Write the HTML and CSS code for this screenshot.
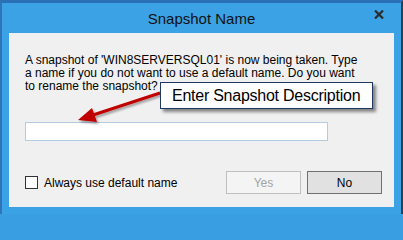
FILE: index.html
```html
<!DOCTYPE html>
<html>
<head>
<meta charset="utf-8">
<link rel="stylesheet" href="styles.css">
</head>
<body>
<div class="window">
  <div class="titlebar">
    <span class="title">Snapshot Name</span>
    <svg class="close" width="10" height="9" viewBox="0 0 10 9"><path d="M1 0.5 L9 8.5 M9 0.5 L1 8.5" stroke="#2b2b2b" stroke-width="2.2"/></svg>
  </div>
  <div class="client">
    <p class="message">A snapshot of 'WIN8SERVERSQL01' is now being taken. Type<br>a name if you do not want to use a default name. Do you want<br>to rename the snapshot?</p>
    <div class="field"></div>
    <div class="footer">
      <label class="check"><span class="box"></span>Always use default name</label>
      <div class="buttons">
        <span class="btn disabled">Yes</span>
        <span class="btn default">No</span>
      </div>
    </div>
  </div>
  <svg class="arrow" width="403" height="214" viewBox="0 0 403 214">
    <defs>
      <filter id="sh" x="-20%" y="-20%" width="140%" height="140%">
        <feDropShadow dx="1.5" dy="2" stdDeviation="1.2" flood-color="#000" flood-opacity="0.35"/>
      </filter>
    </defs>
    <g filter="url(#sh)">
      <line x1="160" y1="93" x2="93" y2="115" stroke="#c00000" stroke-width="3"/>
      <polygon points="78,120 92,108 97,122" fill="#c00000"/>
    </g>
  </svg>
  <div class="callout">Enter Snapshot Description</div>
</div>
</body>
</html>
```
FILE: styles.css
```css
* { box-sizing: border-box; }
html, body {
  margin: 0;
  padding: 0;
  width: 403px;
  height: 214px;
  overflow: hidden;
  background: #3a9fe2;
}
.window {
  position: relative;
  width: 403px;
  height: 214px;
  display: flex;
  flex-direction: column;
  background: #3ba2e5;
  border-top: 3px solid #2b70b6;
  border-left: 2px solid #2f73b8;
  border-right: 2px solid #2e3d4c;
  font-family: "Liberation Sans", Arial, sans-serif;
}
.titlebar {
  height: 30px;
  flex: none;
  display: grid;
  grid-template-columns: 1fr auto 1fr;
  align-items: center;
}
.title {
  grid-column: 2;
  font-size: 15px;
  color: #111;
  padding-top: 1px;
}
.close {
  grid-column: 3;
  justify-self: end;
  align-self: start;
  margin-top: 7px;
  margin-right: 17px;
}
.client {
  flex: 1;
  margin: 0 7px 7px 7px;
  background: #f0f0f0;
  padding: 21px 12px 0 16px;
  display: flex;
  flex-direction: column;
}
.message {
  margin: 0;
  font-size: 12px;
  line-height: 13px;
  color: #000;
  white-space: nowrap;
}
.field {
  margin-top: 29px;
  width: 303px;
  height: 19px;
  background: #fff;
  border: 1px solid #b4cbe1;
}
.footer {
  margin-top: 30px;
  display: flex;
  align-items: center;
  justify-content: space-between;
}
.check {
  display: flex;
  align-items: center;
  gap: 6px;
  font-size: 12px;
  color: #000;
}
.box {
  width: 13px;
  height: 13px;
  background: #fff;
  border: 1px solid #333;
}
.buttons {
  display: flex;
  gap: 6px;
}
.btn {
  width: 75px;
  height: 23px;
  display: flex;
  align-items: center;
  justify-content: center;
  font-size: 12px;
}
.btn.disabled {
  background: #f4f4f4;
  border: 1px solid #bfbfbf;
  color: #a3a3a3;
}
.btn.default {
  background: #e1e1e1;
  border: 1px solid #707070;
  color: #000;
}
.arrow {
  position: absolute;
  left: -2px;
  top: -3px;
  pointer-events: none;
}
.callout {
  position: absolute;
  left: 158px;
  top: 79px;
  width: 213px;
  height: 27px;
  background: #fff;
  border: 1px solid #1f3864;
  box-shadow: 3px 3px 3px rgba(0,0,0,0.45);
  font-size: 16px;
  letter-spacing: -0.25px;
  line-height: 25px;
  padding-left: 11px;
  color: #000;
  white-space: nowrap;
}
```
